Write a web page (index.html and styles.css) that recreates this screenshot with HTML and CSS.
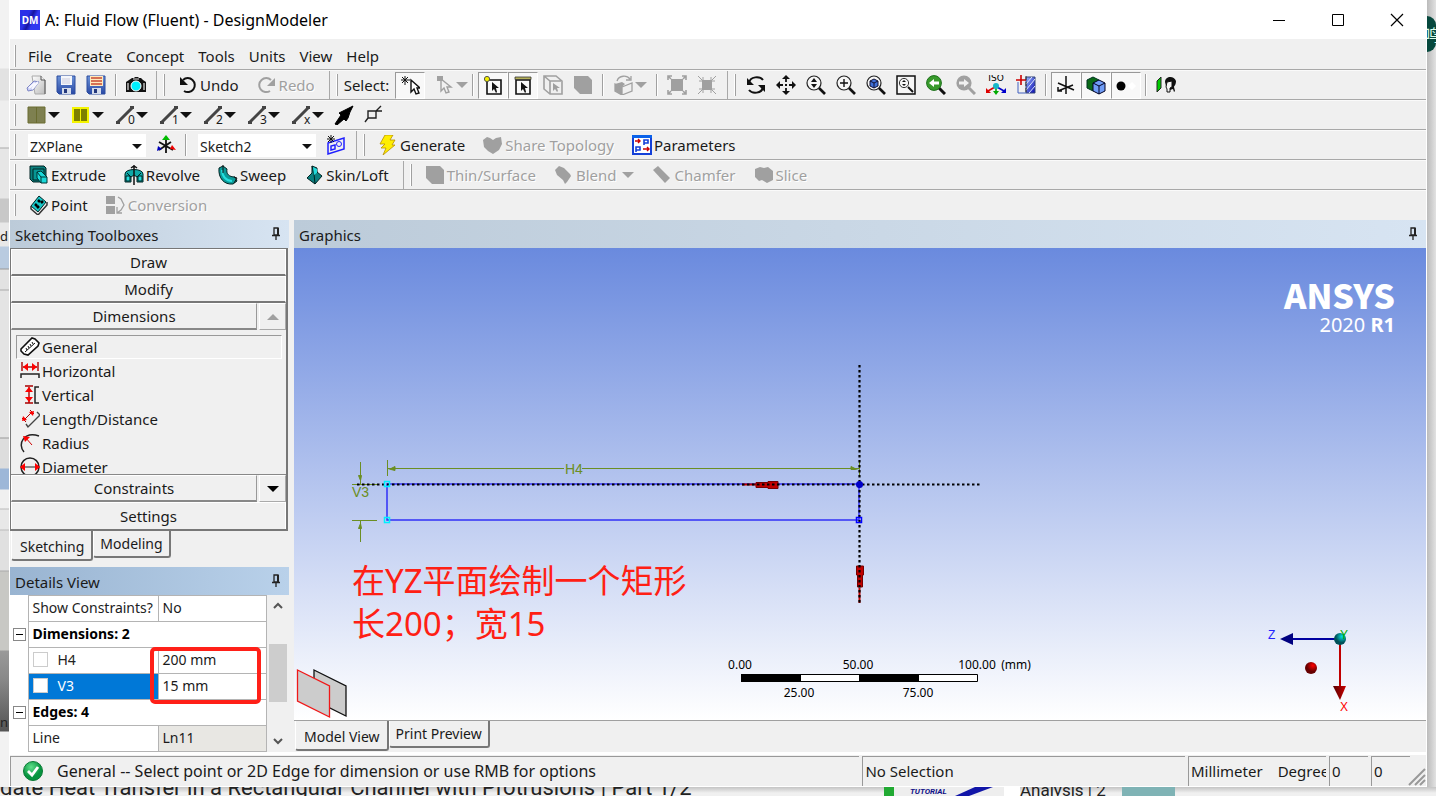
FILE: index.html
```html
<!DOCTYPE html>
<html lang="en">
<head>
<meta charset="utf-8">
<title>A: Fluid Flow (Fluent) - DesignModeler</title>
<link rel="stylesheet" href="styles.css">
</head>
<body>
<svg class="sprite" aria-hidden="true">
  <defs>
    <linearGradient id="page" x1="0" y1="0" x2="1" y2="1"><stop offset="0" stop-color="#fff"/><stop offset="1" stop-color="#bbb"/></linearGradient>
    <linearGradient id="disk" x1="0" y1="0" x2="0" y2="1"><stop offset="0" stop-color="#6c93d8"/><stop offset="1" stop-color="#2848a4"/></linearGradient>
    <linearGradient id="hatch" x1="0" y1="0" x2="1" y2="1"><stop offset="0" stop-color="#9cb8ff"/><stop offset="1" stop-color="#0808b0"/></linearGradient>
    <radialGradient id="green" cx=".4" cy=".3"><stop offset="0" stop-color="#5fe08a"/><stop offset="1" stop-color="#079440"/></radialGradient>
    <radialGradient id="red" cx=".65" cy=".3"><stop offset="0" stop-color="#f00"/><stop offset="1" stop-color="#600"/></radialGradient>
    <radialGradient id="teal" cx=".65" cy=".3"><stop offset="0" stop-color="#00e0e0"/><stop offset="1" stop-color="#005058"/></radialGradient>
    <linearGradient id="redcone"><stop offset="0" stop-color="#500"/><stop offset="1" stop-color="#c00"/></linearGradient>
  </defs>
  <symbol id="i-new" viewBox="0 0 20 20"><path d="M6 1h9l4 4v14H9z" fill="url(#page)" stroke="#aaa"/><path d="M15 1v4h4" fill="#eee" stroke="#555"/><path d="M19 5v14" stroke="#555"/><path d="M1 13l7-7 5 1-6 8-5 1z" fill="#c9cef6" stroke="#7d85c4"/><path d="M3 13l6-5M6 14l6-7" stroke="#f8f8ff" stroke-width="2"/></symbol>
  <symbol id="i-save" viewBox="0 0 20 20"><path d="M1 1h18v18H3l-2-2z" fill="url(#disk)" stroke="#2c4c9e"/><path d="M5 1h11v9H5z" fill="#f4f6fb"/><path d="M6 4h8M6 6h8M6 8h8" stroke="#ccd"/><path d="M6 13h9v6H6z" fill="#d5dcea"/><path d="M8 14h3v4H8z" fill="#24387c"/></symbol>
  <symbol id="i-save2" viewBox="0 0 20 20"><path d="M1 1h18v18H3l-2-2z" fill="url(#disk)" stroke="#2c4c9e"/><path d="M4 1h13v10H4z" fill="#ffe9bd"/><path d="M5 3h11M5 6h11M5 9h11" stroke="#c94a32" stroke-width="1.4"/><path d="M6 13h9v6H6z" fill="#d5dcea"/><path d="M8 14h3v4H8z" fill="#24387c"/></symbol>
  <symbol id="i-cam" viewBox="0 0 20 20"><path d="M0 7l3-2 3-2h2l1-1h3l1 1h2l2 2 3 2v10h-5H5H0z" fill="#111"/><path d="M2 8v7M18 8v7" stroke="#bbb" stroke-width="1.5"/><path d="M7 4h6" stroke="#ddd"/><circle cx="10" cy="11" r="5" fill="#00f0ff" stroke="#fff"/></symbol>
  <symbol id="i-undo" viewBox="0 0 20 20"><path d="M5 5a7 7 0 1 1 1 11" fill="none" stroke="#111" stroke-width="2"/><path d="M2 2v8h8z" fill="#111"/></symbol>
  <symbol id="i-redo" viewBox="0 0 20 20"><path d="M14 5a7 7 0 1 0-1 11" fill="none" stroke="#a0a0a0" stroke-width="2"/><path d="M18 3v8h-8z" fill="#a0a0a0"/></symbol>
  <symbol id="i-pick" viewBox="0 0 20 20"><path d="M11 5v12l3-3 2 5 3-1-2-5h3z" fill="#fff" stroke="#111" stroke-width="1.4"/><path d="M5 1v9M1 5h9M2 2l6 6M8 2L2 8" stroke="#111"/></symbol>
  <symbol id="i-pick2" viewBox="0 0 20 20"><path d="M5 4v12l3-3 2 5 3-1-2-5h4z" fill="none" stroke="#a0a0a0" stroke-width="1.4"/><path d="M1 1h6v5H1z" fill="#a0a0a0"/></symbol>
  <symbol id="i-vertex" viewBox="0 0 20 20"><path d="M4 5h14v14H4z" fill="none" stroke="#111" stroke-width="1.6"/><path d="M9 7v9l2-2 2 4 1-1-1-4h3z" fill="#111"/><circle cx="4" cy="4" r="2.600" fill="#f4f000" stroke="#554"/></symbol>
  <symbol id="i-edge" viewBox="0 0 20 20"><path d="M3 5h14v14H3z" fill="none" stroke="#111" stroke-width="1.6"/><path d="M8 7v9l2-2 2 4 1-1-1-4h3z" fill="#111"/><path d="M2 2h16v2.500H2z" fill="#b5b15a" stroke="#333" stroke-width=".8"/></symbol>
  <symbol id="i-face" viewBox="0 0 20 20"><path d="M1 1h12l6 5v13H7l-6-5zM1 1l6 5h11M7 6v13" fill="none" stroke="#a0a0a0" stroke-width="1.600"/><path d="M10 8v8l2-2 2 3 1-1-1-3h3z" fill="#a0a0a0"/></symbol>
  <symbol id="i-body" viewBox="0 0 20 20"><path d="M1 1h14l4 4v14H7l-6-6z" fill="#a0a0a0"/></symbol>
  <symbol id="i-cube" viewBox="0 0 20 20"><path d="M1 9l7 3v8l-7-4zM8 12l10-4v8l-10 4" fill="#f0f0f0" stroke="#a0a0a0" stroke-width="1.3"/><path d="M1 9l7 3v8l-7-4z" fill="#a0a0a0"/><path d="M3 6c2-6 10-6 13-2M12 5h5V1" fill="none" stroke="#a0a0a0" stroke-width="1.3"/><path d="M1 9l7-2 3 2-3 3z" fill="#a0a0a0"/></symbol>
  <symbol id="i-expand" viewBox="0 0 20 20"><path d="M4 4h12v12H4z" fill="#a0a0a0"/><path d="M1 5V1h4M15 1h4v4M1 15v4h4M19 15v4h-4M1 1l3 3M19 1l-3 3M1 19l3-3M19 19l-3-3" fill="none" stroke="#a0a0a0" stroke-width="1.600"/></symbol>
  <symbol id="i-shrink" viewBox="0 0 20 20"><path d="M5 5h10v10H5z" fill="#a0a0a0"/><path d="M1 1l18 18M19 1L1 19M2 6h4V2M14 2v4h4M2 14h4v4M18 14h-4v4" fill="none" stroke="#a0a0a0"/></symbol>
  <symbol id="i-rot" viewBox="0 0 20 20"><path d="M3 8c1-7 11-7 14-3M17 12c-1 7-11 7-14 3" fill="none" stroke="#111" stroke-width="2"/><path d="M1 3v7h7zM19 17v-7h-7z" fill="#111"/></symbol>
  <symbol id="i-pan" viewBox="0 0 20 20"><path d="M10 3v4M10 13v4M3 10h4M13 10h4M9 10h2" stroke="#111" stroke-width="1.800"/><path d="M10 0l4 4H6zM10 20l4-4H6zM0 10l4-4v8zM20 10l-4-4v8z" fill="#111"/></symbol>
  <symbol id="glass" viewBox="0 0 20 20"><circle cx="8" cy="8" r="7" fill="#f6f6f6" stroke="#222" stroke-width="1.2"/><path d="M13 13l6 6" stroke="#111" stroke-width="2.6"/></symbol>
  <symbol id="i-zoom" viewBox="0 0 20 20"><use href="#glass"/><path d="M8 3l3 4H5zM8 13l3-4H5z" fill="#111"/></symbol>
  <symbol id="i-zin" viewBox="0 0 20 20"><use href="#glass"/><path d="M8 4v8M4 8h8" stroke="#111" stroke-width="1.4"/></symbol>
  <symbol id="i-zfit" viewBox="0 0 20 20"><use href="#glass"/><path d="M4 6l4-2 4 2v5l-4 2-4-2z" fill="#3f70d8" stroke="#113"/><path d="M4 6l4 2 4-2M8 8v5" stroke="#113" fill="none"/></symbol>
  <symbol id="i-zbox" viewBox="0 0 20 20"><path d="M1 1h18v18H1z" fill="#f6f6f6" stroke="#111" stroke-width="1.5"/><circle cx="8" cy="8" r="4.6" fill="none" stroke="#333"/><path d="M8 5l2 2H6zM8 11l2-2H6z" fill="#111"/><path d="M12 12l5 5" stroke="#111" stroke-width="2"/></symbol>
  <symbol id="i-zprev" viewBox="0 0 20 20"><path d="M13 13l6 6" stroke="#111" stroke-width="3"/><circle cx="8" cy="8" r="7.4" fill="#389a2b" stroke="#1c701a"/><path d="M3 8l5-4v2.500h5v3H8V12z" fill="#fff"/></symbol>
  <symbol id="i-znext" viewBox="0 0 20 20"><path d="M13 13l6 6" stroke="#a0a0a0" stroke-width="3"/><circle cx="8" cy="8" r="7.600" fill="#a0a0a0"/><path d="M13 8L8 4v2.500H3v3h5V12z" fill="#f0f0f0"/></symbol>
  <symbol id="i-iso" viewBox="0 0 20 20"><text x="10" y="6" class="iso-text">ISO</text><path d="M10 12v6" stroke="#0a0" stroke-width="1.6"/><path d="M7 16l3 4 3-4z" fill="#0a0"/><path d="M9 12l-7 4" stroke="#d00" stroke-width="1.600"/><path d="M0 13v5h5z" fill="#d00"/><path d="M11 12l7 4" stroke="#00c" stroke-width="1.600"/><path d="M20 13v5h-5z" fill="#00c"/><circle cx="10" cy="11" r="3" fill="#18b8c8"/></symbol>
  <symbol id="i-look" viewBox="0 0 20 20"><path d="M2 7v11h8" fill="none" stroke="#4060c0"/><path d="M10 2h9v16h-9z" fill="url(#hatch)" stroke="#347"/><path d="M10 9l6-7M10 15l9-11M13 18l6-7" stroke="#dde8ff"/><path d="M5 0v10M0 5h10" stroke="#c00" stroke-width="1.600"/><path d="M10 1v18" stroke="#333" stroke-dasharray="4 2"/></symbol>
  <symbol id="i-axes" viewBox="0 0 20 20"><path d="M10 1v18M2 8l16 7M2 16l15-6M2 12v4h4" fill="none" stroke="#111" stroke-width="1.500"/></symbol>
  <symbol id="i-cubes" viewBox="0 0 20 20"><path d="M1 5l6-3 6 3v8l-6 3-6-3z" fill="#0a6a17" stroke="#032"/><path d="M7 8l6-3 6 3v8l-6 3-6-3z" fill="#6f9cf5" stroke="#002"/><path d="M7 8l6 3 6-3M13 11v8" fill="none" stroke="#002"/></symbol>
  <symbol id="i-dots" viewBox="0 0 20 20"><circle cx="5" cy="11" r="4.500" fill="#000"/><path d="M16 7l4 4-4 4-4-4z" fill="#fff"/></symbol>
  <symbol id="i-head" viewBox="0 0 20 20"><path d="M1 6l4-4v11l-4 4z" fill="#0c0" stroke="#222"/><path d="M9 7c0-6 9-7 11-1 0 4-2 5-2 6l1 4-1 1-1-3-3 1-1-3-3-1z" fill="#111"/><path d="M11 7l5-1v6l-2 1v4h-3v-3l-1-2z" fill="#f4f4f4" stroke="#111"/></symbol>
  <symbol id="i-p1" viewBox="0 0 20 20"><path d="M1 2h17v16H1z" fill="#7e8050"/><path d="M1 2h17v16H1zM9.500 2v16" fill="none" stroke="#6a6c30"/></symbol>
  <symbol id="i-p2" viewBox="0 0 20 20"><path d="M1 2h17v16H1z" fill="#f4f400"/><path d="M3 4h6v12H3zM10 4h6v12h-6z" fill="#7e8000"/></symbol>
  <symbol id="stick" viewBox="0 0 20 20"><path d="M3 17L18 2" stroke="#444" stroke-width="3"/><path d="M1 16h4v3H1zM15 1h4v3h-4z" fill="#444"/></symbol>
  <symbol id="i-arrow" viewBox="0 0 20 20"><path d="M1 19l6-9-2-2 4-2 6-3 4-2-3 6-2 6-2 3-2-2-7 6z" fill="#000" stroke="#000"/></symbol>
  <symbol id="i-pt" viewBox="0 0 20 20"><path d="M4 6h8v7H4zM12 6l5-5M12 6h6M4 13l-3 4" fill="none" stroke="#222" stroke-width="1.400"/></symbol>
  <symbol id="i-plane" viewBox="0 0 20 20"><path d="M10 5v13M3 7l14 8M3 15L15 7" stroke="#111" stroke-width="1.800"/><path d="M10 0l4 5H6z" fill="#0b0"/><path d="M20 15l-6-1 2-4z" fill="#e00"/><path d="M1 16l1-5 4 3z" fill="#00b"/></symbol>
  <symbol id="i-sk" viewBox="0 0 20 20"><path d="M2 8l16-5v11L2 19zM5 15v-4l4-1v4z" fill="none" stroke="#2020ff" stroke-width="1.500"/><circle cx="13" cy="9" r="2.500" fill="none" stroke="#2020ff"/><path d="M5 0v8M1 4h8M2 1l6 6M8 1L2 7" stroke="#111"/></symbol>
  <symbol id="i-gen" viewBox="0 0 20 20"><path d="M7 0h8l-3 5h5l-3 5h3L5 20l3-7H3l4-4H2z" fill="#ffee00" stroke="#b88f00" stroke-width=".8"/></symbol>
  <symbol id="i-share" viewBox="0 0 20 20"><path d="M0 5l4-3 3 1 3 2 3-2 5-1 1 7-3 6-6 4-5-3-4-4z" fill="#a0a0a0"/></symbol>
  <symbol id="i-par" viewBox="0 0 20 20"><path d="M1 1h18v18H1z" fill="#fff" stroke="#1440d8" stroke-width="2"/><path d="M0 0h20v3H0z" fill="#0a62ea"/><path d="M3 6h5M6 4l2 2-2 2M11 14h6M15 12l2 2-2 2" fill="none" stroke="#c00" stroke-width="1.400"/><path d="M12 10V5h4v3h-4M4 17v-5h4v3H4" fill="none" stroke="#1440d8" stroke-width="1.600"/></symbol>
  <symbol id="i-ext" viewBox="0 0 20 20"><path d="M1 1h14l2 2v14H4l-3-3z" fill="#0b7f7c" stroke="#022"/><path d="M4 4h11v11H4z" fill="#079693" stroke="#022"/><path d="M8 7l4-1 6 6v6h-6l-4-5z" fill="#19d8d8" stroke="#033"/><path d="M12 18v-6h6M8 7l4 5" fill="none" stroke="#033"/></symbol>
  <symbol id="i-rev" viewBox="0 0 20 20"><path d="M1 17V9c0-6 18-6 18 0v8h-6v-5l-3-2-3 2v5z" fill="#0fa9a8" stroke="#022"/><path d="M7 12L3 8M13 12l4-4M2 11h4v5H2zM14 11h4v5h-4z" stroke="#022" fill="#20dede"/><path d="M10 0v20M7 3l3-2 3 2" fill="none" stroke="#111" stroke-width="1.500"/></symbol>
  <symbol id="i-swp" viewBox="0 0 20 20"><path d="M1 3l4-2 4 3c-1 5 2 8 8 8l2 4-4 3C6 20 0 13 1 3z" fill="#0b9a98" stroke="#022"/><path d="M4 5c0 6 4 11 10 11" fill="none" stroke="#24e0df" stroke-width="2"/><path d="M5 0v8M16 12l3 1-3 5" fill="none" stroke="#111"/></symbol>
  <symbol id="i-skin" viewBox="0 0 20 20"><path d="M8 1l5 2v4l5 4-7 8-8-6 5-5z" fill="#0b7f7e" stroke="#022"/><path d="M8 1l2 8 1 10M10 9l4-2" stroke="#022" fill="none"/><path d="M9 2l4 2v4l-3 2z" fill="#24dada"/></symbol>
  <symbol id="i-blend" viewBox="0 0 20 20"><path d="M1 5l4-4 5 2 6 6 1 2-4 6-2 2-2-4-6-5z" fill="#a0a0a0"/></symbol>
  <symbol id="i-cham" viewBox="0 0 20 20"><path d="M1 5l5-4 12 12-5 5z" fill="#a0a0a0"/></symbol>
  <symbol id="i-slice" viewBox="0 0 20 20"><path d="M1 4l5-2 4 1 4-1 5 4v9l-6 3-5-3-3 1-4-4z" fill="#a0a0a0"/></symbol>
  <symbol id="i-point" viewBox="0 0 20 20"><path d="M10 1l7 6-8 10-7-6z" fill="#18c8c8" stroke="#022"/><path d="M2 11v3l7 6 9-10V7" fill="none" stroke="#333" stroke-width="1.500"/><path d="M9 5l2 2M12 8l2-2M6 9l2 2M8 13l2-2" stroke="#000" stroke-width="2.500"/></symbol>
  <symbol id="i-conv" viewBox="0 0 20 20"><path d="M0 1h9v8H0zM0 11h9v8H0z" fill="#a0a0a0"/><path d="M12 2l3 2 3 6-3 5-4 3M11 12v6h5" fill="none" stroke="#a0a0a0" stroke-width="1.300"/></symbol>
  <symbol id="i-ruler" viewBox="0 0 20 20"><path d="M1 12L12 1l3 1 4 4-1 3L8 18l-4-1-3-3z" fill="#fff" stroke="#111" stroke-width="1.600"/><path d="M5 15l10-9M7 13l-1-2M9 11L8 9M11 9l-1-2M13 7l-1-2" stroke="#111"/></symbol>
  <symbol id="i-hor" viewBox="0 0 20 20"><path d="M2 1v9M18 1v9M3 6h14" stroke="#a00" stroke-width="1.400"/><path d="M3 6l5-4v8zM17 6l-5-4v8z" fill="#f00"/><path d="M1 17v-4h18v4" fill="none" stroke="#222" stroke-width="1.500"/></symbol>
  <symbol id="i-ver" viewBox="0 0 20 20"><path d="M5 1h8M5 18h8M9 2v16" stroke="#a00" stroke-width="1.400"/><path d="M9 2l4 5H5zM9 17l4-5H5z" fill="#f00"/><path d="M19 2h-4v16h4" fill="none" stroke="#222" stroke-width="1.500"/></symbol>
  <symbol id="i-len" viewBox="0 0 20 20"><path d="M2 9l4 4M10 1l4 4M4 11l8-8" stroke="#a00"/><path d="M2 12l1-5 4 4zM14 2l-1 5-4-4z" fill="#f00"/><path d="M6 15l2 3L18 8l2-2-3-3" fill="none" stroke="#444" stroke-width="1.400"/></symbol>
  <symbol id="i-rad" viewBox="0 0 20 20"><path d="M4 19C-3 11 4-2 19 3" fill="none" stroke="#222" stroke-width="1.500"/><path d="M5 4l7 8" stroke="#c00"/><path d="M3 3l7 1-5 5z" fill="#f00"/></symbol>
  <symbol id="i-dia" viewBox="0 0 20 20"><circle cx="10" cy="10" r="9" fill="none" stroke="#222" stroke-width="1.500"/><path d="M2 10h16" stroke="#222"/><path d="M0 10l5-4v8zM20 10l-5-4v8z" fill="#f00"/></symbol>
  <symbol id="i-pin" viewBox="0 0 20 20"><path d="M8 4h4v7H8zM6 11.500h8M10 12v4" fill="none" stroke="#222" stroke-width="1.300"/><path d="M11 4h2v7h-2z" fill="#222"/></symbol>
  <symbol id="i-ok" viewBox="0 0 20 20"><circle cx="10" cy="10" r="9.500" fill="url(#green)" stroke="#0a7a35"/><path d="M5 10l4 4 6-8" fill="none" stroke="#fff" stroke-width="2.800"/></symbol>
</svg>

<div class="desktop">
  <div class="back-left"><span class="back-word">d I</span><span class="back-foot">n</span></div>

  <main class="window">
    <header class="titlebar">
      <span class="app-icon">DM</span>
      <h1>A: Fluid Flow (Fluent) - DesignModeler</h1>
      <button class="win-btn" aria-label="Minimize"><svg viewBox="0 0 14 14"><path d="M1 7.500h12" stroke="#000"/></svg></button>
      <button class="win-btn" aria-label="Maximize"><svg viewBox="0 0 14 14"><path d="M1.500 1.500h11v11h-11z" fill="none" stroke="#000"/></svg></button>
      <button class="win-btn" aria-label="Close"><svg viewBox="0 0 14 14"><path d="M1 1l12 12M13 1L1 13" stroke="#000" stroke-width="1.200"/></svg></button>
    </header>

    <nav class="bar menu">
      <i class="grip"></i>
      <button>File</button><button>Create</button><button>Concept</button><button>Tools</button><button>Units</button><button>View</button><button>Help</button>
    </nav>

    <div class="bar">
      <div class="group">
        <i class="grip"></i>
        <button class="tool" aria-label="New"><svg><use href="#i-new"/></svg></button>
        <button class="tool" aria-label="Save"><svg><use href="#i-save"/></svg></button>
        <button class="tool" aria-label="Save all"><svg><use href="#i-save2"/></svg></button>
        <i class="sep"></i>
        <button class="tool" aria-label="Capture"><svg><use href="#i-cam"/></svg></button>
      </div>
      <div class="group">
        <i class="grip"></i>
        <button class="cmd"><svg><use href="#i-undo"/></svg>Undo</button>
        <button class="cmd" disabled><svg><use href="#i-redo"/></svg>Redo</button>
      </div>
      <div class="group">
        <i class="grip"></i>
        <span class="caption">Select:</span>
        <button class="tool pressed" aria-label="New selection"><svg><use href="#i-pick"/></svg></button>
        <button class="tool drop wide" aria-label="Select mode" disabled><svg><use href="#i-pick2"/></svg></button>
        <i class="sep"></i>
        <button class="tool pressed" aria-label="Points"><svg><use href="#i-vertex"/></svg></button>
        <button class="tool pressed" aria-label="Edges"><svg><use href="#i-edge"/></svg></button>
        <button class="tool" aria-label="Faces" disabled><svg><use href="#i-face"/></svg></button>
        <button class="tool" aria-label="Bodies" disabled><svg><use href="#i-body"/></svg></button>
        <i class="sep"></i>
        <button class="tool drop" aria-label="Extend selection" disabled><svg><use href="#i-cube"/></svg></button>
        <i class="sep"></i>
        <button class="tool" aria-label="Expand" disabled><svg><use href="#i-expand"/></svg></button>
        <button class="tool" aria-label="Shrink" disabled><svg><use href="#i-shrink"/></svg></button>
      </div>
      <div class="group last">
        <i class="grip"></i>
        <button class="tool" aria-label="Rotate"><svg><use href="#i-rot"/></svg></button>
        <button class="tool" aria-label="Pan"><svg><use href="#i-pan"/></svg></button>
        <button class="tool" aria-label="Zoom"><svg><use href="#i-zoom"/></svg></button>
        <button class="tool" aria-label="Box zoom"><svg><use href="#i-zin"/></svg></button>
        <button class="tool" aria-label="Zoom to fit"><svg><use href="#i-zfit"/></svg></button>
        <button class="tool" aria-label="Magnifier"><svg><use href="#i-zbox"/></svg></button>
        <button class="tool" aria-label="Previous view"><svg><use href="#i-zprev"/></svg></button>
        <button class="tool" aria-label="Next view" disabled><svg><use href="#i-znext"/></svg></button>
        <button class="tool" aria-label="ISO view"><svg><use href="#i-iso"/></svg></button>
        <button class="tool" aria-label="Look at"><svg><use href="#i-look"/></svg></button>
        <i class="sep"></i>
        <button class="tool pressed" aria-label="Display plane"><svg><use href="#i-axes"/></svg></button>
        <button class="tool pressed" aria-label="Display model"><svg><use href="#i-cubes"/></svg></button>
        <button class="tool pressed" aria-label="Display points"><svg><use href="#i-dots"/></svg></button>
        <i class="sep"></i>
        <button class="tool" aria-label="Look at face"><svg><use href="#i-head"/></svg></button>
      </div>
    </div>

    <div class="bar">
      <i class="grip"></i>
      <button class="tool drop" aria-label="Face color"><svg><use href="#i-p1"/></svg></button>
      <button class="tool drop" aria-label="Edge color"><svg><use href="#i-p2"/></svg></button>
      <button class="tool drop" aria-label="Edges 0"><svg><use href="#stick"/></svg><sub>0</sub></button>
      <button class="tool drop" aria-label="Edges 1"><svg><use href="#stick"/></svg><sub>1</sub></button>
      <button class="tool drop" aria-label="Edges 2"><svg><use href="#stick"/></svg><sub>2</sub></button>
      <button class="tool drop" aria-label="Edges 3"><svg><use href="#stick"/></svg><sub>3</sub></button>
      <button class="tool drop" aria-label="Edges x"><svg><use href="#stick"/></svg><sub>x</sub></button>
      <button class="tool" aria-label="Edge direction"><svg><use href="#i-arrow"/></svg></button>
      <button class="tool" aria-label="Display vertices"><svg><use href="#i-pt"/></svg></button>
    </div>

    <div class="bar">
      <div class="group">
        <i class="grip"></i>
        <label class="combo"><select aria-label="Plane"><option>ZXPlane</option></select></label>
        <button class="tool" aria-label="New plane"><svg><use href="#i-plane"/></svg></button>
        <i class="sep"></i>
        <label class="combo"><select aria-label="Sketch"><option>Sketch2</option></select></label>
        <button class="tool" aria-label="New sketch"><svg><use href="#i-sk"/></svg></button>
      </div>
      <div class="group last">
        <i class="grip"></i>
        <button class="cmd"><svg><use href="#i-gen"/></svg>Generate</button>
        <button class="cmd" disabled><svg><use href="#i-share"/></svg>Share Topology</button>
        <button class="cmd"><svg><use href="#i-par"/></svg>Parameters</button>
      </div>
    </div>

    <div class="bar">
      <div class="group">
        <i class="grip"></i>
        <button class="cmd"><svg><use href="#i-ext"/></svg>Extrude</button>
        <button class="cmd"><svg><use href="#i-rev"/></svg>Revolve</button>
        <button class="cmd"><svg><use href="#i-swp"/></svg>Sweep</button>
        <button class="cmd"><svg><use href="#i-skin"/></svg>Skin/Loft</button>
      </div>
      <div class="group last">
        <i class="grip"></i>
        <button class="cmd" disabled><svg><use href="#i-body"/></svg>Thin/Surface</button>
        <button class="cmd menu-cmd" disabled><svg><use href="#i-blend"/></svg>Blend</button>
        <button class="cmd" disabled><svg><use href="#i-cham"/></svg>Chamfer</button>
        <button class="cmd" disabled><svg><use href="#i-slice"/></svg>Slice</button>
      </div>
    </div>

    <div class="bar">
      <i class="grip"></i>
      <button class="cmd"><svg><use href="#i-point"/></svg>Point</button>
      <button class="cmd" disabled><svg><use href="#i-conv"/></svg>Conversion</button>
    </div>

    <div class="work">
      <aside class="side">
        <h2 class="pane-title">Sketching Toolboxes<svg><use href="#i-pin"/></svg></h2>
        <div class="toolbox">
          <button class="section">Draw</button>
          <button class="section">Modify</button>
          <div class="section-row"><button class="section">Dimensions</button><button class="scroll" aria-label="Scroll up"><i class="tri up"></i></button></div>
          <ul class="tools">
            <li><button class="active"><svg><use href="#i-ruler"/></svg>General</button></li>
            <li><button><svg><use href="#i-hor"/></svg>Horizontal</button></li>
            <li><button><svg><use href="#i-ver"/></svg>Vertical</button></li>
            <li><button><svg><use href="#i-len"/></svg>Length/Distance</button></li>
            <li><button><svg><use href="#i-rad"/></svg>Radius</button></li>
            <li><button><svg><use href="#i-dia"/></svg>Diameter</button></li>
          </ul>
          <div class="section-row"><button class="section">Constraints</button><button class="scroll" aria-label="Scroll down"><i class="tri"></i></button></div>
          <button class="section">Settings</button>
        </div>
        <div class="tabs"><button class="tab current">Sketching</button><button class="tab">Modeling</button></div>
        <h2 class="pane-title focus">Details View<svg><use href="#i-pin"/></svg></h2>
        <div class="details">
          <table>
            <tbody>
              <tr><td class="gutter"></td><th scope="row">Show Constraints?</th><td>No</td></tr>
              <tr class="head"><td class="gutter"><button aria-label="Collapse"></button></td><th colspan="2" scope="rowgroup">Dimensions: 2</th></tr>
              <tr><td class="gutter"></td><th scope="row"><label><input type="checkbox">H4</label></th><td>200 mm</td></tr>
              <tr class="selected"><td class="gutter"></td><th scope="row"><label><input type="checkbox">V3</label></th><td>15 mm</td></tr>
              <tr class="head"><td class="gutter"><button aria-label="Collapse"></button></td><th colspan="2" scope="rowgroup">Edges: 4</th></tr>
              <tr><td class="gutter"></td><th scope="row">Line</th><td class="locked">Ln11</td></tr>
            </tbody>
          </table>
          <div class="scrollbar">
            <svg viewBox="0 0 10 10"><path d="M1 7l4-4 4 4" fill="none" stroke="#555" stroke-width="2"/></svg>
            <i class="thumb"></i>
            <svg viewBox="0 0 10 10"><path d="M1 3l4 4 4-4" fill="none" stroke="#555" stroke-width="2"/></svg>
          </div>
          <div class="mark"></div>
        </div>
      </aside>

      <section class="graphics">
        <h2 class="pane-title">Graphics<svg><use href="#i-pin"/></svg></h2>
        <div class="viewport">
          <svg class="sketch" viewBox="294 248 760 474">
            <g stroke="#6b8e23" fill="none">
              <path d="M387.500 460v16M859.500 460v16M388 468.500h176M582 468.500h277M352 484.500h25M360.500 462v22M352 520.500h25M360.500 520v22"/>
              <path d="M388 468.500h3l4-2v4l-4-1zM859 468.500h-4l-4-2v3h4zM358.500 475.500h3l-1 5zM358.500 528.500h3l-1-5z" fill="#6b8e23"/>
            </g>
            <path d="M387 484h472v36H387z" fill="none" stroke="#3030f8" stroke-width="1.500"/>
            <path d="M742 484.500h15M859.500 603v-15" stroke="#c00000" stroke-width="2"/>
            <path d="M756 482.500h12v-1h10v7h-10v-1h-12zM857.500 587v-12h-1v-9h7v9h-1v12z" fill="#c00000" stroke="#700"/>
            <path d="M357 484.500h623M859.500 365v238" stroke="#000" stroke-width="2.200" stroke-dasharray="2.500 2.500"/>
            <path d="M384.500 481.500h5v5h-5zM384.500 517.500h5v5h-5z" fill="none" stroke="#00f0ff" stroke-width="1.500"/>
            <path d="M856.500 517.500h5v5h-5z" fill="none" stroke="#00f" stroke-width="1.500"/>
            <circle cx="859.500" cy="484.500" r="3.500" fill="#0000c8"/>
            <g class="dim"><text x="565" y="474">H4</text><text x="352" y="497">V3</text></g>
            <path d="M314 670l32 16v30l-32-16z" fill="#ccc" stroke="#111" stroke-width="1.300"/>
            <path d="M297.500 670l32 16v31l-32-16z" fill="#ccc" stroke="#f01818" stroke-width="1.300"/>
            <path d="M741.500 674.500h236v7h-236z" fill="#fff" stroke="#000"/>
            <path d="M741 674h60v8h-60zM859 674h60v8h-60z"/>
            <g class="scale"><text x="740" y="669">0.00</text><text x="858" y="669">50.00</text><text x="977" y="669">100.00</text><text x="1016" y="669">(mm)</text><text x="799" y="697">25.00</text><text x="918" y="697">75.00</text></g>
          </svg>
          <p class="note">在YZ平面绘制一个矩形<br>长200；宽15</p>
          <div class="brand"><strong>ANSYS</strong><span>2020 <b>R1</b></span></div>
          <svg class="triad" viewBox="0 0 90 90">
            <path d="M20 14h54" stroke="#0000a0" stroke-width="2"/><path d="M14 14l13-6v12z" fill="#000080"/>
            <path d="M74 16v46" stroke="#c00000" stroke-width="2"/><path d="M67 61h13l-6 14z" fill="url(#redcone)"/>
            <circle cx="74" cy="14" r="6" fill="url(#teal)"/><circle cx="45" cy="43" r="6" fill="url(#red)"/>
            <g class="axis"><text x="2" y="14" fill="#22f">Z</text><text x="74" y="14" fill="#0a0">Y</text><text x="74" y="86" fill="#f00">X</text></g>
          </svg>
        </div>
        <div class="tabs"><button class="tab current">Model View</button><button class="tab">Print Preview</button></div>
      </section>
    </div>

    <footer class="status">
      <div class="cell message"><svg><use href="#i-ok"/></svg>General -- Select point or 2D Edge for dimension or use RMB for options</div>
      <div class="cell selection">No Selection</div>
      <div class="cell units"><span>Millimeter</span><span>Degree</span></div>
      <div class="cell count">0</div>
      <div class="cell count">0</div>
      <svg class="resize" viewBox="0 0 18 18"><path d="M1 17L17 1M7 17L17 7M12 17l5-5" stroke="#999" stroke-width="2"/></svg>
    </footer>
  </main>

  <div class="back-right"><span class="avatar">鸣</span></div>

  <div class="back-bottom">
    <span class="video">date Heat Transfer in a Rectangular Channel with Protrusions | Part 1/2</span>
    <span class="thumb-tile">TUTORIAL<svg viewBox="0 0 40 9"><path d="M0 9L20 0h18L14 9z" fill="#1216a8"/></svg></span>
    <span class="video">Analysis | 2</span>
    <span class="teal-tile"></span>
  </div>
</div>
</body>
</html>
```
FILE: styles.css
```css
* { box-sizing: border-box; }

body {
  margin: 0;
  background: #f2f2f2;
  color: #1a1a1a;
  font: 15px/20px "Noto Sans", "Noto Sans CJK SC", sans-serif;
  overflow: hidden;
}

button, select, input { font: inherit; color: inherit; margin: 0; }
button { border: 0; padding: 0; background: none; white-space: nowrap; }
h1, h2, p, ul { margin: 0; padding: 0; font-size: 15px; font-weight: 400; list-style: none; }
svg { display: block; flex: none; }
.sprite { position: absolute; width: 0; height: 0; }

/* desktop behind the window */
.desktop {
  display: grid;
  grid-template-columns: 9px minmax(0, 1fr) 9px;
  grid-template-rows: minmax(0, 1fr) 9px;
  height: 100vh;
}
.back-left {
  display: flex;
  flex-direction: column;
  padding-top: 226px;
  overflow: hidden;
  white-space: nowrap;
  font-size: 13px;
  background: linear-gradient(#f2f2f2 0 68px, #e2e2e2 69px 100px, #eee 101px 147px, #aaa 148px, #e6e6e6 149px 198px, #c8c8c8 199px 222px, #e8e8e8 223px 246px, #b9cbe0 247px 268px, #999 269px, #e2e2e2 270px 289px, #aaa 290px, #e4e4e4 291px 437px, #999 438px, #ddd 439px 468px, #9db7d8 469px 489px, #f0f0f0 490px 508px, #bbb 509px, #e8e8e8 510px 529px, #bbb 530px, #e0e0e0 531px 570px, #aaa 571px, #c8c8c4 572px 650px, #999 651px, #888 680px, #555 731px, #f2f2f2 732px);
}
.back-foot { margin-top: 466px; color: #222; }
.back-right {
  display: flex;
  align-items: flex-start;
  padding-top: 16px;
  background: linear-gradient(90deg, #bbb, #e2e2e2);
  overflow: hidden;
}
.avatar {
  display: flex;
  flex: none;
  width: 9px;
  height: 36px;
  align-items: center;
  justify-content: center;
  border-radius: 0 9px 9px 0;
  background: #06483d;
  color: #dfe;
  font: 16px "Noto Sans CJK SC", sans-serif;
  overflow: hidden;
}
.back-bottom {
  grid-column: 1 / -1;
  display: flex;
  align-items: flex-end;
  overflow: hidden;
  white-space: nowrap;
  background: linear-gradient(#c4c4c4, #f0f0f0 6px);
  font: 22px/16px Roboto, sans-serif;
  color: #222;
}
.video { width: 884px; flex: none; }
.thumb-tile {
  display: flex;
  flex: none;
  gap: 8px;
  width: 136px;
  padding-left: 26px;
  background: linear-gradient(90deg, #2a3 0 10px, #eee 10px 120px, #fff 120px);
  font: italic bold 8px/9px Roboto, sans-serif;
  color: #118;
}
.thumb-tile svg { width: 40px; height: 9px; }
.thumb-tile + .video { width: 102px; font-size: 17px; line-height: 12px; }
.teal-tile { width: 53px; height: 9px; background: #7fb3b5; }

/* window frame */
.window {
  display: flex;
  flex-direction: column;
  min-width: 0;
  border: solid #fff;
  border-width: 0 1px 1px;
  background: #f0f0f0;
}
.titlebar { display: flex; align-items: center; flex: none; height: 39px; padding-left: 10px; background: #fff; color: #000; }
.titlebar h1 { flex: 1; padding-left: 5px; font-size: 16px; }
.app-icon {
  width: 20px;
  height: 20px;
  background: linear-gradient(115deg, #2a30e8 35%, #1515a0 50%, #3038f0 65%);
  color: #fff;
  font: bold 10px/20px "Noto Sans", sans-serif;
  text-align: center;
}
.win-btn { display: flex; width: 59px; height: 39px; align-items: center; justify-content: center; }
.win-btn svg { width: 14px; height: 14px; }

/* toolbars */
.bar {
  display: flex;
  flex: none;
  align-items: center;
  height: 30px;
  border-top: 1px solid #fafafa;
  border-bottom: 1px solid #a8a8a8;
}
.bar.menu { height: 31px; padding-top: 3px; border-top: 0; }
.menu button { padding: 0 7px; }
.bar:has(+ .work) { border-bottom-color: #f0f0f0; }
.group { display: flex; align-items: center; height: 28px; padding-right: 5px; margin-right: 2px; border-right: 1px solid #a8a8a8; }
.group.last { border-right: 0; }
.grip { flex: none; width: 2px; height: 22px; margin: 0 5px 0 4px; border-right: 1px solid #a0a0a0; border-left: 1px solid #fff; }
.sep { flex: none; width: 2px; height: 22px; margin: 0 4px; border-left: 1px solid #a0a0a0; border-right: 1px solid #fff; }
.tool { position: relative; display: flex; flex: none; width: 30px; height: 27px; align-items: center; justify-content: center; }
.tool svg, .cmd svg { width: 20px; height: 20px; }
.pressed { border: 1px solid; border-color: #999 #fff #fff #999; background: #f8f8f8; }
.drop::after, .menu-cmd::after { content: ""; border: 6px solid transparent; border-top-color: #111; border-bottom: 0; }
.drop { width: 44px; justify-content: flex-start; gap: 1px; padding-left: 6px; }
.tool.wide { width: 43px; padding-left: 11px; gap: 0; }
.drop:disabled::after, .menu-cmd:disabled::after { border-top-color: #a0a0a0; }
.menu-cmd::after { margin-left: 4px; }
.tool sub { position: absolute; left: 19px; bottom: 3px; font: 12px/12px "Noto Sans", sans-serif; }
.cmd { display: flex; flex: none; align-items: center; gap: 2px; padding: 0 9px 0 8px; }
.cmd + .cmd { padding-left: 9px; }
.cmd:disabled { color: #a0a0a0; text-shadow: 1px 1px #fff; }
.caption { padding: 0 6px 0 1px; }
.combo { position: relative; display: flex; margin: 0 5px 0 7px; }
.combo select { width: 118px; height: 23px; padding: 3px 2px 0; border: 0; border-radius: 0; background: #fff; appearance: none; font-size: 14px; outline: 0; }
.combo::after { content: ""; position: absolute; right: 4px; top: 10px; border: 5px solid transparent; border-top-color: #111; border-bottom: 0; pointer-events: none; }
.iso-text { font: 9px "DejaVu Sans", sans-serif; text-anchor: middle; }

/* panes */
.work { display: flex; flex: 1; min-height: 0; gap: 5px; }
.side { display: flex; flex: none; flex-direction: column; width: 279px; }
.pane-title {
  display: flex;
  flex: none;
  align-items: center;
  justify-content: space-between;
  height: 28px;
  padding: 2px 3px 0 5px;
  background: linear-gradient(90deg, #bccbd9, #d7e4f2);
}
.pane-title svg { width: 20px; height: 20px; margin-bottom: 2px; }
.pane-title.focus { background: linear-gradient(90deg, #99b4d1, #b9d1ea); }
.toolbox { width: 278px; border: 1px solid #777; border-width: 1px 2px 2px 1px; }
.section {
  display: block;
  width: 100%;
  height: 27px;
  border: 1px solid;
  border-color: #fff #fff #777 #fff;
  border-bottom-width: 2px;
  text-align: center;
}
.section:last-child { border-bottom: 0; }
.section-row { display: flex; gap: 2px; }
.section-row .section { flex: 1; border-right: 1px solid #999; border-bottom: 2px solid #888; }
.scroll { display: flex; width: 27px; height: 27px; align-items: center; justify-content: center; border: 1px solid; border-color: #fff #aaa #aaa #fff; }
.tri { border: 6px solid transparent; border-top-color: #000; border-bottom: 0; }
.tri.up { border: 6px solid transparent; border-bottom-color: #a0a0a0; border-top: 0; }
.tools { height: 145px; padding: 5px 4px 0 5px; overflow: hidden; border-bottom: 1px solid #888; }
.tools button { display: flex; width: 100%; height: 24px; align-items: center; gap: 2px; padding-left: 3px; border: 1px solid transparent; }
.tools button.active { border-color: #999 #fff #fff #999; }
.tools svg { width: 20px; height: 20px; }

.tabs { display: flex; flex: none; align-items: flex-start; padding-left: 1px; height: 36px; }
.graphics .tabs { height: 31px; }
.tab { height: 27px; padding: 0 6px; border: 1px solid; border-color: #eee #777 #777 #fff; border-width: 0 2px 2px 1px; border-radius: 0 0 3px 3px; font-size: 14px; }
.tab.current { height: 30px; padding: 3px 7px 0 8px; }

.details { position: relative; display: flex; flex: 1; min-height: 0; overflow: hidden; background: #fff; font-size: 14px; }
.details table { flex: 1; height: 157px; table-layout: fixed; border-collapse: collapse; }
.details tr { height: 26px; }
.details td, .details th { padding: 0 4px 2px; border: 1px solid #b4b4b4; font-weight: 400; text-align: left; }
.details th { width: 130px; color: #222; white-space: nowrap; }
.details .head th { font-weight: 700; color: #000; }
.details td.gutter { width: 18px; padding: 0; border: 0; }
.gutter button { display: block; width: 13px; height: 13px; margin-left: 3px; border: 1px solid #888; }
.gutter button::after { content: ""; display: block; height: 1px; margin: 0 2px; background: #000; }
.details label { display: flex; align-items: center; gap: 10px; }
.details input { width: 15px; height: 15px; appearance: none; border: 1px solid #ccc; background: #fff; }
.details .selected th { background: #0078d7; color: #fff; }
.locked { background: #e8e7e3; }
.scrollbar { display: flex; flex: none; flex-direction: column; align-items: center; width: 22px; padding: 6px 0; background: #f0f0f0; }
.scrollbar svg { width: 10px; height: 10px; }
.thumb { width: 18px; height: 58px; margin: 33px 0 auto; background: #cdcdcd; }
.mark { position: absolute; left: 140px; top: 52px; width: 111px; height: 57px; border: 4px solid #ff2018; border-radius: 5px; }

.graphics { display: flex; flex: 1; min-width: 0; flex-direction: column; }
.viewport { position: relative; flex: 1; min-height: 0; overflow: hidden; border-bottom: 1px solid #a0a0a0; background: linear-gradient(#6a8ade, #fff); }
.sketch { width: 760px; height: 474px; }
.dim { fill: #6b8e23; font: 14px "Liberation Sans", sans-serif; }
.scale { font: 12px "Noto Sans", sans-serif; text-anchor: middle; }
.axis { font: 12px "Liberation Sans", sans-serif; }
.note { position: absolute; left: 58px; top: 311px; color: #ff2014; font-size: 33px; line-height: 43px; white-space: nowrap; }
.brand { position: absolute; right: 31px; top: 28px; display: flex; flex-direction: column; align-items: flex-end; color: #fff; font-size: 20px; line-height: 22px; }
.brand strong { font: 900 34px/38px "Noto Sans CJK SC", sans-serif; }
.triad { position: absolute; right: 70px; bottom: 5px; width: 90px; height: 90px; overflow: visible; }

/* status bar */
.status { display: flex; flex: none; gap: 3px; height: 34px; padding-top: 1px; border-top: 3px solid #fff; }
.cell { display: flex; align-items: center; border-top: 1px solid #999; border-left: 1px solid #999; padding: 0 0 2px 2px; overflow: hidden; white-space: nowrap; }
.message { flex: 848; min-width: 0; padding-left: 12px; gap: 14px; font-size: 16px; }
.message svg { width: 20px; height: 20px; }
.selection { flex: 324; min-width: 0; }
.units { width: 138px; gap: 15px; }
.count { width: 39px; }
.resize { width: 18px; height: 18px; align-self: flex-end; margin-left: -5px; }
```
